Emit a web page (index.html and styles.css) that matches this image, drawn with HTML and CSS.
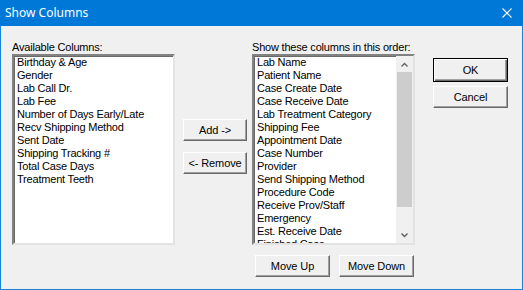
FILE: index.html
```html
<!DOCTYPE html>
<html lang="en">
<head>
    <meta charset="UTF-8">
    <title>Show Columns</title>
    <link rel="stylesheet" href="styles.css">
</head>
<body>
    <div class="window">
        <div class="titlebar">
            <span class="title">Show Columns</span>
            <svg class="close" width="10" height="10" viewBox="0 0 10 10">
                <path d="M0.5 0.5 L9.5 9.5 M9.5 0.5 L0.5 9.5" stroke="#fff" stroke-width="1.1"/>
            </svg>
        </div>

        <div class="dialog">
            <div class="panel">
                <div class="label">Available Columns:</div>
                <div class="listbox">
                    <div class="items">
                        <div>Birthday &amp; Age</div>
                        <div>Gender</div>
                        <div>Lab Call Dr.</div>
                        <div>Lab Fee</div>
                        <div>Number of Days Early/Late</div>
                        <div>Recv Shipping Method</div>
                        <div>Sent Date</div>
                        <div>Shipping Tracking #</div>
                        <div>Total Case Days</div>
                        <div>Treatment Teeth</div>
                    </div>
                </div>
            </div>

            <div class="middle">
                <button class="btn btn-add">Add -&gt;</button>
                <button class="btn btn-remove">&lt;- Remove</button>
            </div>

            <div class="panel">
                <div class="label">Show these columns in this order:</div>
                <div class="listbox">
                    <div class="items">
                        <div>Lab Name</div>
                        <div>Patient Name</div>
                        <div>Case Create Date</div>
                        <div>Case Receive Date</div>
                        <div>Lab Treatment Category</div>
                        <div>Shipping Fee</div>
                        <div>Appointment Date</div>
                        <div>Case Number</div>
                        <div>Provider</div>
                        <div>Send Shipping Method</div>
                        <div>Procedure Code</div>
                        <div>Receive Prov/Staff</div>
                        <div>Emergency</div>
                        <div>Est. Receive Date</div>
                        <div>Finished Case</div>
                    </div>
                    <div class="scrollbar">
                        <div class="arrow">
                            <svg width="7" height="5" viewBox="0 0 7 5"><path d="M0.5 4.5 L3.5 1.5 L6.5 4.5" stroke="#606060" stroke-width="1.4" fill="none"/></svg>
                        </div>
                        <div class="track"><div class="thumb"></div></div>
                        <div class="arrow">
                            <svg width="7" height="5" viewBox="0 0 7 5"><path d="M0.5 0.5 L3.5 3.5 L6.5 0.5" stroke="#606060" stroke-width="1.4" fill="none"/></svg>
                        </div>
                    </div>
                </div>
                <div class="move-row">
                    <button class="btn btn-move">Move Up</button>
                    <button class="btn btn-move">Move Down</button>
                </div>
            </div>

            <div class="actions">
                <button class="btn btn-default">OK</button>
                <button class="btn btn-cancel">Cancel</button>
            </div>
        </div>
    </div>
</body>
</html>
```

FILE: styles.css
```css
html, body {
    margin: 0;
    padding: 0;
}
body {
    font-family: "Liberation Sans", Arial, sans-serif;
    font-size: 11px;
    color: #000;
    background: #f0f0f0;
}
.window {
    width: 523px;
    height: 290px;
    box-sizing: border-box;
    border: 1px solid #1883d7;
    border-top: none;
    background: #f0f0f0;
}
.titlebar {
    height: 26px;
    margin: 0 -1px;
    background: #0078d7;
    color: #fff;
    display: flex;
    align-items: center;
    justify-content: space-between;
    padding: 0 11px 0 5px;
}
.title {
    font-family: "Noto Sans", sans-serif;
    font-size: 12px;
    line-height: 16px;
}
.close {
    display: block;
}
.dialog {
    display: flex;
    padding: 15px 0 0 11px;
}
.panel {
    width: 163px;
    display: flex;
    flex-direction: column;
}
.label {
    height: 13px;
    line-height: 13px;
    letter-spacing: -0.2px;
    white-space: nowrap;
}
.listbox {
    height: 191px;
    box-sizing: border-box;
    background: #fff;
    border: 2px solid;
    border-color: #828282 #e3e3e3 #e3e3e3 #828282;
    box-shadow: inset 1px 1px 0 #696969;
    display: flex;
    overflow: hidden;
}
.items {
    flex: 1;
    padding-left: 3px;
    line-height: 13px;
    letter-spacing: -0.2px;
    white-space: nowrap;
    overflow: hidden;
}
.scrollbar {
    width: 17px;
    display: flex;
    flex-direction: column;
    background: #f0f0f0;
}
.arrow {
    height: 16px;
    display: flex;
    align-items: center;
    justify-content: center;
}
.arrow svg {
    display: block;
}
.track {
    flex: 1;
    display: flex;
    flex-direction: column;
}
.thumb {
    margin: 0 1px;
    height: 135px;
    background: #cdcdcd;
}
.middle {
    width: 64px;
    margin: 0 5px 0 8px;
    padding-top: 78px;
    display: flex;
    flex-direction: column;
    gap: 11px;
}
.btn {
    font-family: "Liberation Sans", Arial, sans-serif;
    font-size: 11px;
    letter-spacing: -0.1px;
    color: #000;
    background: #f0f0f0;
    border: 1px solid;
    border-color: #fff #696969 #696969 #fff;
    box-shadow: inset -1px -1px 0 #a0a0a0;
    height: 22px;
    padding: 0;
    box-sizing: border-box;
}
.btn-add, .btn-remove {
    width: 64px;
}
.move-row {
    display: flex;
    gap: 9px;
    margin: 10px 0 0 3px;
}
.btn-move {
    width: 75px;
}
.actions {
    margin-left: 18px;
    padding-top: 17px;
    display: flex;
    flex-direction: column;
    gap: 4px;
}
.btn-default {
    width: 75px;
    height: 24px;
    border: 1px solid #000;
    box-shadow: inset 1px 1px 0 #fff, inset -1px -1px 0 #696969, inset -2px -2px 0 #a0a0a0;
}
.btn-cancel {
    width: 75px;
}
```
